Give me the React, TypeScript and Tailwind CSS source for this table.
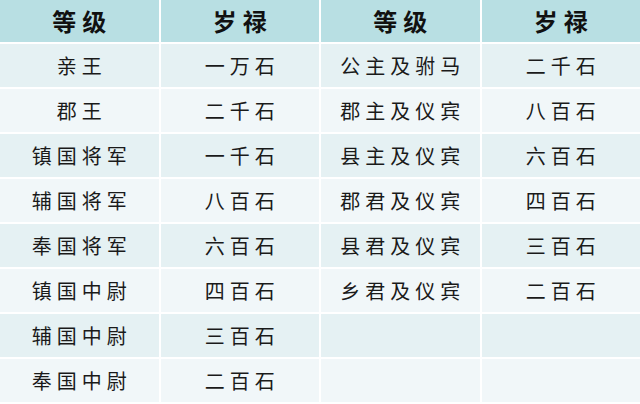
const left: [string, string][] = [
  ["亲王", "一万石"],
  ["郡王", "二千石"],
  ["镇国将军", "一千石"],
  ["辅国将军", "八百石"],
  ["奉国将军", "六百石"],
  ["镇国中尉", "四百石"],
  ["辅国中尉", "三百石"],
  ["奉国中尉", "二百石"],
];

const right: [string, string][] = [
  ["公主及驸马", "二千石"],
  ["郡主及仪宾", "八百石"],
  ["县主及仪宾", "六百石"],
  ["郡君及仪宾", "四百石"],
  ["县君及仪宾", "三百石"],
  ["乡君及仪宾", "二百石"],
  ["", ""],
  ["", ""],
];

const font = { fontFamily: '"Noto Sans CJK SC", "Noto Sans CJK JP", sans-serif' };

function Cell({ text, odd }: { text: string; odd: boolean }) {
  return (
    <div
      className={`h-[43px] flex items-center justify-center text-[20px] tracking-[5px] pl-[5px] text-[#1a1a1a] ${
        odd ? "bg-[#e5f1f3]" : "bg-[#f1f7f9]"
      }`}
    >
      {text}
    </div>
  );
}

export default function App() {
  const headers = ["等级", "岁禄", "等级", "岁禄"];
  return (
    <div className="w-[640px] h-[404px] bg-white overflow-hidden" style={font}>
      <div className="grid grid-cols-4 gap-[2px]">
        {headers.map((h, i) => (
          <div
            key={i}
            className="h-[42px] flex items-center justify-center bg-[#b8dfe3] text-[24px] font-bold tracking-[6px] pl-[6px] text-[#111]"
          >
            {h}
          </div>
        ))}
        {left.map((row, i) => (
          <div key={i} className="contents">
            <Cell text={row[0]} odd={i % 2 === 0} />
            <Cell text={row[1]} odd={i % 2 === 0} />
            <Cell text={right[i][0]} odd={i % 2 === 0} />
            <Cell text={right[i][1]} odd={i % 2 === 0} />
          </div>
        ))}
      </div>
    </div>
  );
}
